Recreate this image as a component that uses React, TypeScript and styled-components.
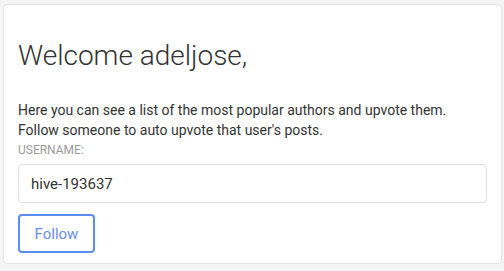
import React from "react";
import styled, { createGlobalStyle } from "styled-components";

const Global = createGlobalStyle`
  html, body { margin: 0; padding: 0; background: #f5f5f5; }
  body { font-family: Roboto, "Noto Sans", sans-serif; }
  * { box-sizing: border-box; }
`;

const Page = styled.div`
  padding: 4px 2px 7px 3px;
`;

const Card = styled.div`
  background: #fff;
  border: 1px solid #e2e2e2;
  border-radius: 4px;
  height: 260px;
  padding: 0 14px;
  display: flex;
  flex-direction: column;
`;

const Title = styled.h1`
  margin: 33px 0 0;
  font-weight: 300;
  font-size: 28px;
  line-height: 36px;
  color: #333;
`;

const Text = styled.p`
  margin: 26px 0 0;
  font-size: 14px;
  line-height: 20px;
  color: #333;
`;

const Label = styled.label`
  display: block;
  margin-top: 2px;
  font-size: 12px;
  line-height: 16px;
  color: #9b9b9b;
  text-transform: uppercase;
`;

const Input = styled.input`
  display: block;
  margin-top: 6px;
  width: 469px;
  height: 39px;
  border: 1px solid #e0e0e0;
  border-radius: 4px;
  padding: 0 12px;
  font-family: inherit;
  font-size: 15px;
  color: #333;
  outline: none;
`;

const Button = styled.button`
  margin-top: 11px;
  width: 77px;
  height: 39px;
  background: #fff;
  border: 2px solid #5b8ef0;
  border-radius: 4px;
  color: #6b8ef0;
  font-family: inherit;
  font-size: 15px;
  cursor: pointer;
`;

export default function App() {
  return (
    <>
      <Global />
      <Page>
        <Card>
          <Title>Welcome adeljose,</Title>
          <Text>
            Here you can see a list of the most popular authors and upvote them.
            <br />
            Follow someone to auto upvote that user's posts.
          </Text>
          <Label>Username:</Label>
          <div>
            <Input defaultValue="hive-193637" />
          </div>
          <div>
            <Button>Follow</Button>
          </div>
        </Card>
      </Page>
    </>
  );
}
